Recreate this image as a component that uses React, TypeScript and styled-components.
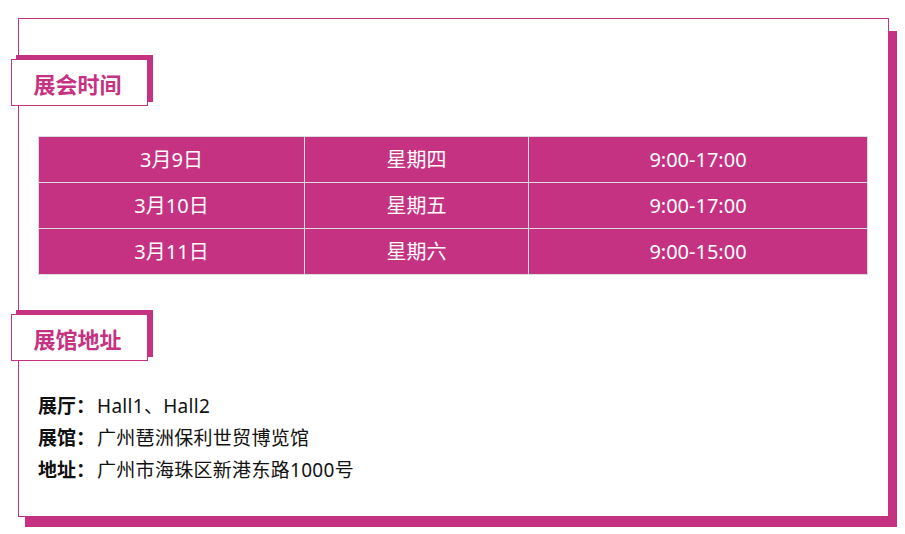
import styled, { createGlobalStyle } from 'styled-components'

const GlobalStyle = createGlobalStyle`
	body {
		margin: 8px;
		background: #fff;
		font-family: 'Noto Sans', 'Noto Sans CJK SC', sans-serif;
	}
`

const schedule = [
	{ date: '3月9日', day: '星期四', time: '9:00-17:00' },
	{ date: '3月10日', day: '星期五', time: '9:00-17:00' },
	{ date: '3月11日', day: '星期六', time: '9:00-15:00' },
]

const address = [
	{ label: '展厅：', value: 'Hall1、Hall2' },
	{ label: '展馆：', value: '广州琶洲保利世贸博览馆' },
	{ label: '地址：', value: '广州市海珠区新港东路1000号' },
]

const App = () => {
	return (
		<>
			<GlobalStyle />
			<Card>
				<SectionTab>展会时间</SectionTab>
				<Table>
					<colgroup>
						<col style={{ width: 266 }} />
						<col style={{ width: 224 }} />
						<col />
					</colgroup>
					<tbody>
						{schedule.map(row => (
							<tr key={row.date}>
								<Cell>{row.date}</Cell>
								<Cell>{row.day}</Cell>
								<Cell>{row.time}</Cell>
							</tr>
						))}
					</tbody>
				</Table>
				<SectionTab $gap={39}>展馆地址</SectionTab>
				<InfoList>
					{address.map(item => (
						<InfoRow key={item.label}>
							<Label>{item.label}</Label>
							<Value>{item.value}</Value>
						</InfoRow>
					))}
				</InfoList>
			</Card>
		</>
	)
}

export default App

const Card = styled.div`
	position: relative;
	box-sizing: border-box;
	width: 871px;
	height: 499px;
	margin: 10px;
	padding: 40px 20px 0 19px;
	background: #fff;
	border: 1px solid #c63282;

	&::before {
		content: '';
		position: absolute;
		left: 6px;
		top: 12px;
		right: -11px;
		bottom: -11px;
		background: #c63282;
		z-index: -1;
	}
`

const SectionTab = styled.h3<{ $gap?: number }>`
	box-sizing: border-box;
	display: flex;
	align-items: center;
	justify-content: center;
	width: 137px;
	height: 47px;
	margin: ${p => p.$gap ?? 0}px 0 0 -27px;
	padding-right: 4px;
	background: #fff;
	border: 1px solid #c63282;
	box-shadow: 5px -4px 0 #c63282;
	color: #c63282;
	font-family: 'Noto Sans CJK SC', sans-serif;
	font-size: 22px;
	font-weight: 700;
	line-height: 1;
`

const Table = styled.table`
	width: 830px;
	margin-top: 30px;
	border-collapse: collapse;
	table-layout: fixed;
	background: #c63282;
`

const Cell = styled.td`
	box-sizing: border-box;
	height: 46px;
	padding: 0;
	border: 1px solid #dcdcdc;
	color: #fff;
	font-size: 20px;
	line-height: 24px;
	text-align: center;
	vertical-align: middle;
`

const InfoList = styled.div`
	display: flex;
	flex-direction: column;
	margin-top: 28px;
`

const InfoRow = styled.div`
	display: flex;
	align-items: center;
	height: 32px;
	font-size: 19px;
	color: #111;
`

const Label = styled.span`
	width: 59px;
	font-weight: 700;
`

const Value = styled.span`
	letter-spacing: 0.3px;
`
